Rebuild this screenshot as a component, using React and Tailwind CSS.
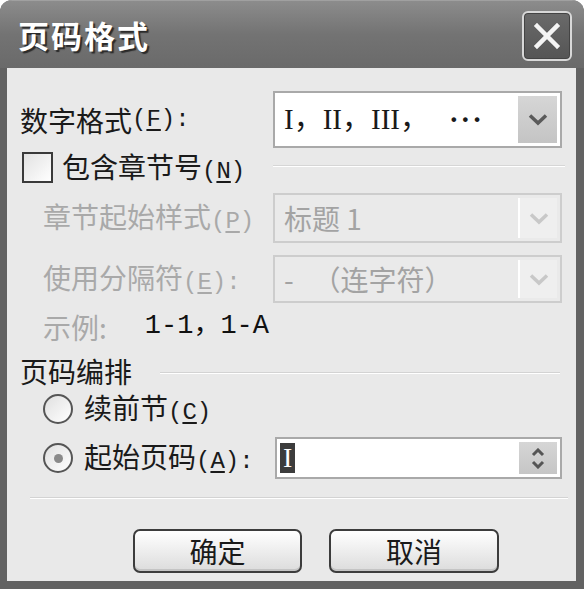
import React from "react";

const cjk = { fontFamily: '"Noto Sans CJK SC", "Noto Sans", sans-serif' };
const mono = { fontFamily: '"Liberation Mono", monospace' };

function Mn({ k, colon }) {
  return (
    <span style={mono} className="text-[24px]">
      (<span className="underline underline-offset-[3px]">{k}</span>){colon ? ":" : ""}
    </span>
  );
}

function Chevron({ color = "#555" }) {
  return (
    <svg width="20" height="13" viewBox="0 0 20 13">
      <path d="M2 2.5 L10 10 L18 2.5" fill="none" stroke={color} strokeWidth="3.5" strokeLinejoin="miter" />
    </svg>
  );
}

function Combo({ children, disabled }) {
  return (
    <div
      className={`w-full h-full flex items-center border-2 ${
        disabled ? "border-[#cdcdcd] bg-[#eaeaea]" : "border-[#a9a9a9] bg-white"
      }`}
    >
      <div className="flex-1 pl-[9px] flex items-center">{children}</div>
      <div
        className={`w-[39px] self-stretch my-[3px] mr-[3px] flex items-center justify-center ${
          disabled ? "bg-[#efefef] border-l-2 border-white" : "bg-gradient-to-b from-[#d6d6d6] to-[#c4c4c4]"
        }`}
      >
        <Chevron color={disabled ? "#c8c8c8" : "#5a5a5a"} />
      </div>
    </div>
  );
}

export default function App() {
  return (
    <div className="w-[584px] h-[589px] bg-white" style={cjk}>
      <div className="w-full h-full rounded-t-[12px] bg-[#626262] flex flex-col overflow-hidden">
        {/* Title bar */}
        <div className="h-[68px] shrink-0 flex items-center justify-between pl-[18px] pr-[12px] bg-gradient-to-b from-[#8c8c8c] via-[#737373] to-[#6a6a6a] border-t border-[#a0a0a0]">
          <span className="text-white text-[31px] font-bold leading-none tracking-[2px] [text-shadow:2px_2px_1px_#2a2a2a]">
            页码格式
          </span>
          <div className="w-[50px] h-[50px] mt-[2px] rounded-[6px] border-2 border-[#d8d8d8] bg-gradient-to-b from-[#6a6a6a] to-[#555] flex items-center justify-center shadow-[inset_0_0_0_1px_#444]">
            <svg width="28" height="28" viewBox="0 0 28 28">
              <path d="M4 4 L24 24 M24 4 L4 24" stroke="#f4f4f4" strokeWidth="4.5" strokeLinecap="square" />
            </svg>
          </div>
        </div>

        {/* Body */}
        <div className="mx-[7px] mr-[8px] h-[513px] bg-[#e9e9e9] text-[#1a1a1a] text-[28px] leading-none pt-[23px] flex flex-col">
          {/* Row 1 */}
          <div className="h-[57px] flex items-center">
            <div className="w-[266px] pl-[13px] flex items-center">
              数字格式<Mn k="F" colon />
            </div>
            <div className="w-[289px] h-full">
              <Combo>
                <span
                  style={{ fontFamily: '"Liberation Serif", "Noto Sans CJK SC", serif' }}
                  className="text-[29px] flex items-center"
                >
                  <span>I，II，III，</span>
                  <span className="font-bold tracking-[2px] ml-[20px]">···</span>
                </span>
              </Combo>
            </div>
          </div>

          {/* Row 2 */}
          <div className="mt-[4px] h-[31px] flex items-center">
            <div className="w-[266px] pl-[15px] flex items-center">
              <div className="w-[31px] h-[31px] border-2 border-[#3a3a3a] bg-gradient-to-br from-[#e2e2e2] to-white" />
              <span className="ml-[9px]">
                包含章节号<Mn k="N" />
              </span>
            </div>
            <div className="w-[292px] h-[2px] bg-[#d6d6d6] border-b border-white mt-[-4px]" />
          </div>

          {/* Row 3 */}
          <div className="mt-[10px] h-[50px] flex items-center text-[#a9a9a9]">
            <div className="w-[266px] pl-[36px]">
              章节起始样式<Mn k="P" />
            </div>
            <div className="w-[289px] h-full">
              <Combo disabled>
                <span className="text-[#a3a3a3]">标题 1</span>
              </Combo>
            </div>
          </div>

          {/* Row 4 */}
          <div className="mt-[12px] h-[48px] flex items-center text-[#a9a9a9]">
            <div className="w-[266px] pl-[36px]">
              使用分隔符<Mn k="E" colon />
            </div>
            <div className="w-[289px] h-full">
              <Combo disabled>
                <span className="text-[#a3a3a3] whitespace-pre">-   （连字符）</span>
              </Combo>
            </div>
          </div>

          {/* Row 5 */}
          <div className="mt-[11px] h-[25px] flex items-center">
            <span className="pl-[36px] text-[#a9a9a9]">示例:</span>
            <span
              className="ml-[38px] text-[27px] text-[#111]"
              style={{ fontFamily: '"Liberation Mono", "Noto Sans CJK SC", monospace' }}
            >
              1-1，1-A
            </span>
          </div>

          {/* Group title */}
          <div className="mt-[18px] h-[28px] flex items-center">
            <span className="pl-[13px]">页码编排</span>
            <div className="flex-1 ml-[28px] mr-[16px] h-[2px] bg-[#d3d3d3] border-b border-white mt-[4px]" />
          </div>

          {/* Radio 1 */}
          <div className="mt-[9px] h-[30px] flex items-center pl-[36px]">
            <div className="w-[30px] h-[30px] rounded-full border-2 border-[#555] bg-gradient-to-br from-[#e0e0e0] to-white" />
            <span className="ml-[11px]">
              续前节<Mn k="C" />
            </span>
          </div>

          {/* Radio 2 */}
          <div className="mt-[13px] h-[42px] flex items-center">
            <div className="w-[266px] pl-[36px] flex items-center">
              <div className="w-[30px] h-[30px] rounded-full border-2 border-[#555] bg-gradient-to-br from-[#e0e0e0] to-white flex items-center justify-center">
                <div className="w-[9px] h-[9px] rounded-full bg-[#8a8a8a]" />
              </div>
              <span className="ml-[11px]">
                起始页码<Mn k="A" colon />
              </span>
            </div>
            <div className="ml-[2px] w-[287px] h-full border-2 border-[#a9a9a9] bg-white flex items-center">
              <div className="flex-1 pl-[3px] flex items-center">
                <span
                  className="bg-[#3c3c3c] text-white px-[3px] h-[30px] flex items-center text-[28px]"
                  style={{ fontFamily: '"Liberation Serif", serif' }}
                >
                  I
                </span>
              </div>
              <div className="w-[38px] self-stretch my-[3px] mr-[3px] bg-gradient-to-b from-[#d6d6d6] to-[#c6c6c6] flex flex-col items-center justify-center gap-[3px]">
                <svg width="14" height="9" viewBox="0 0 14 9">
                  <path d="M2 7 L7 2 L12 7" fill="none" stroke="#555" strokeWidth="3" />
                </svg>
                <svg width="14" height="9" viewBox="0 0 14 9">
                  <path d="M2 2 L7 7 L12 2" fill="none" stroke="#555" strokeWidth="3" />
                </svg>
              </div>
            </div>
          </div>

          {/* Separator */}
          <div className="mt-[18px] ml-[23px] mr-[8px] h-[2px] bg-[#d3d3d3] border-b border-white" />

          {/* Buttons */}
          <div className="mt-[30px] flex pl-[126px] gap-[27px]">
            <div className="w-[169px] h-[44px] rounded-[7px] border-2 border-[#3c3c3c] bg-gradient-to-b from-white to-[#dcdcdc] flex items-center justify-center shadow-[inset_0_-2px_0_#c4c4c4]">
              确定
            </div>
            <div className="w-[170px] h-[44px] rounded-[7px] border-2 border-[#3c3c3c] bg-gradient-to-b from-white to-[#dcdcdc] flex items-center justify-center shadow-[inset_0_-2px_0_#c4c4c4]">
              取消
            </div>
          </div>
        </div>
      </div>
    </div>
  );
}
